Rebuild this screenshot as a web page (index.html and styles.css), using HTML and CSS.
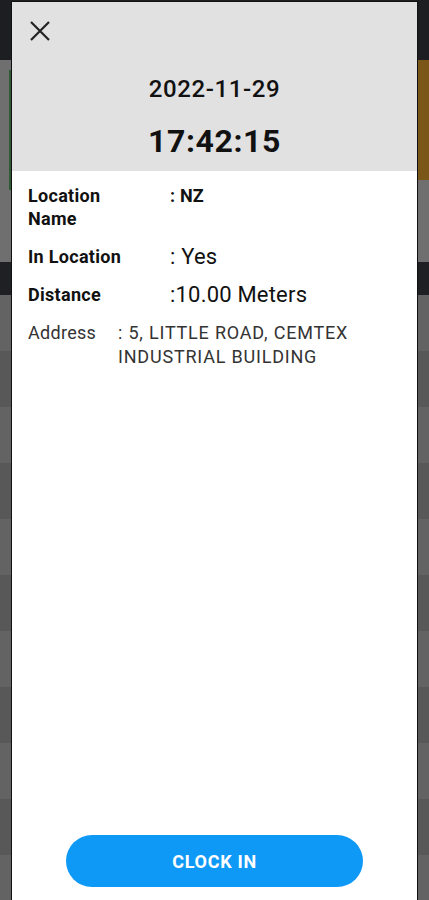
FILE: index.html
```html
<!DOCTYPE html>
<html>
<head>
    <meta charset="UTF-8">
    <title>Clock In</title>
    <link rel="stylesheet" href="styles.css">
</head>
<body>
    <div class="backdrop">
        <div class="bg-top"></div>
        <div class="bg-card">
            <div class="bg-green"></div>
            <div class="bg-orange"></div>
        </div>
        <div class="bg-bar"></div>
        <div class="bg-row a"></div>
        <div class="bg-row b"></div>
        <div class="bg-row a"></div>
        <div class="bg-row b"></div>
        <div class="bg-row a"></div>
        <div class="bg-row b"></div>
        <div class="bg-row a"></div>
        <div class="bg-row b"></div>
        <div class="bg-row a"></div>
        <div class="bg-row b"></div>
        <div class="bg-row a"></div>
    </div>

    <div class="modal">
        <div class="modal-head">
            <button class="close-btn" aria-label="Close">
                <svg width="22" height="22" viewBox="0 0 22 22">
                    <path d="M2 2 L20 20 M20 2 L2 20" stroke="#222" stroke-width="2.2" fill="none"/>
                </svg>
            </button>
            <div class="date">2022-11-29</div>
            <div class="time">17:42:15</div>
        </div>
        <div class="modal-body">
            <div class="info-row">
                <div class="label">Location Name</div>
                <div class="value small">: NZ</div>
            </div>
            <div class="info-row">
                <div class="label">In Location</div>
                <div class="value">: Yes</div>
            </div>
            <div class="info-row">
                <div class="label">Distance</div>
                <div class="value">:10.00 Meters</div>
            </div>
            <div class="address-row">
                <div class="addr-label">Address</div>
                <div class="addr-value">: 5, LITTLE ROAD, CEMTEX INDUSTRIAL BUILDING</div>
            </div>
        </div>
        <div class="modal-foot">
            <button class="clock-btn">CLOCK IN</button>
        </div>
    </div>
</body>
</html>
```

FILE: styles.css
```css
body {
    margin: 0;
    font-family: Roboto, "Noto Sans", sans-serif;
    background-color: #5e5e5e;
    overflow: hidden;
}
.backdrop {
    height: 900px;
}
.bg-top {
    height: 60px;
    background-color: #1c1e22;
}
.bg-card {
    height: 202px;
    background-color: #6f6f6f;
    display: flex;
    justify-content: space-between;
}
.bg-green {
    width: 2px;
    height: 120px;
    margin: 10px 0 0 9px;
    background-color: #2e5a35;
}
.bg-orange {
    width: 12px;
    height: 120px;
    background-color: #7a5618;
}
.bg-bar {
    height: 33px;
    background-color: #1f2023;
}
.bg-row {
    height: 56px;
}
.bg-row.a {
    background-color: #636363;
}
.bg-row.b {
    background-color: #585858;
}

.modal {
    position: fixed;
    top: 1px;
    left: 11px;
    width: 405px;
    bottom: 0;
    background-color: #fff;
    border: 1px solid #111;
    border-bottom: none;
    display: flex;
    flex-direction: column;
}
.modal-head {
    background-color: #e1e1e1;
    height: 169px;
    position: relative;
    text-align: center;
    color: #111;
}
.close-btn {
    position: absolute;
    left: 17px;
    top: 18px;
    padding: 0;
    border: none;
    background: none;
}
.date {
    padding-top: 72px;
    font-size: 24px;
    font-weight: 500;
    letter-spacing: 0.6px;
    line-height: 30px;
}
.time {
    margin-top: 19px;
    font-size: 32px;
    font-weight: 700;
    letter-spacing: 0.6px;
    line-height: 36px;
}
.modal-body {
    flex-grow: 1;
    padding: 13px 16px 0 16px;
}
.info-row {
    display: flex;
    margin-bottom: 15px;
}
.label {
    width: 122px;
    padding-right: 20px;
    font-size: 18px;
    font-weight: 700;
    letter-spacing: 0.3px;
    color: #111;
    line-height: 23px;
}
.value {
    font-size: 22px;
    color: #111;
    line-height: 23px;
    letter-spacing: 0.2px;
}
.value.small {
    font-size: 18px;
    font-weight: 700;
}
.address-row {
    display: flex;
    color: #333;
    font-size: 18px;
    letter-spacing: 0.8px;
    line-height: 24px;
}
.addr-label {
    width: 90px;
    flex-shrink: 0;
    letter-spacing: 0.3px;
}
.addr-value {
    width: 260px;
}
.modal-foot {
    padding: 0 0 13px 0;
    display: flex;
    justify-content: center;
}
.clock-btn {
    width: 297px;
    height: 52px;
    border: none;
    border-radius: 26px;
    background-color: #0e99f6;
    color: #fff;
    font-family: Roboto, sans-serif;
    font-size: 18px;
    font-weight: 700;
    letter-spacing: 0.7px;
}
```
